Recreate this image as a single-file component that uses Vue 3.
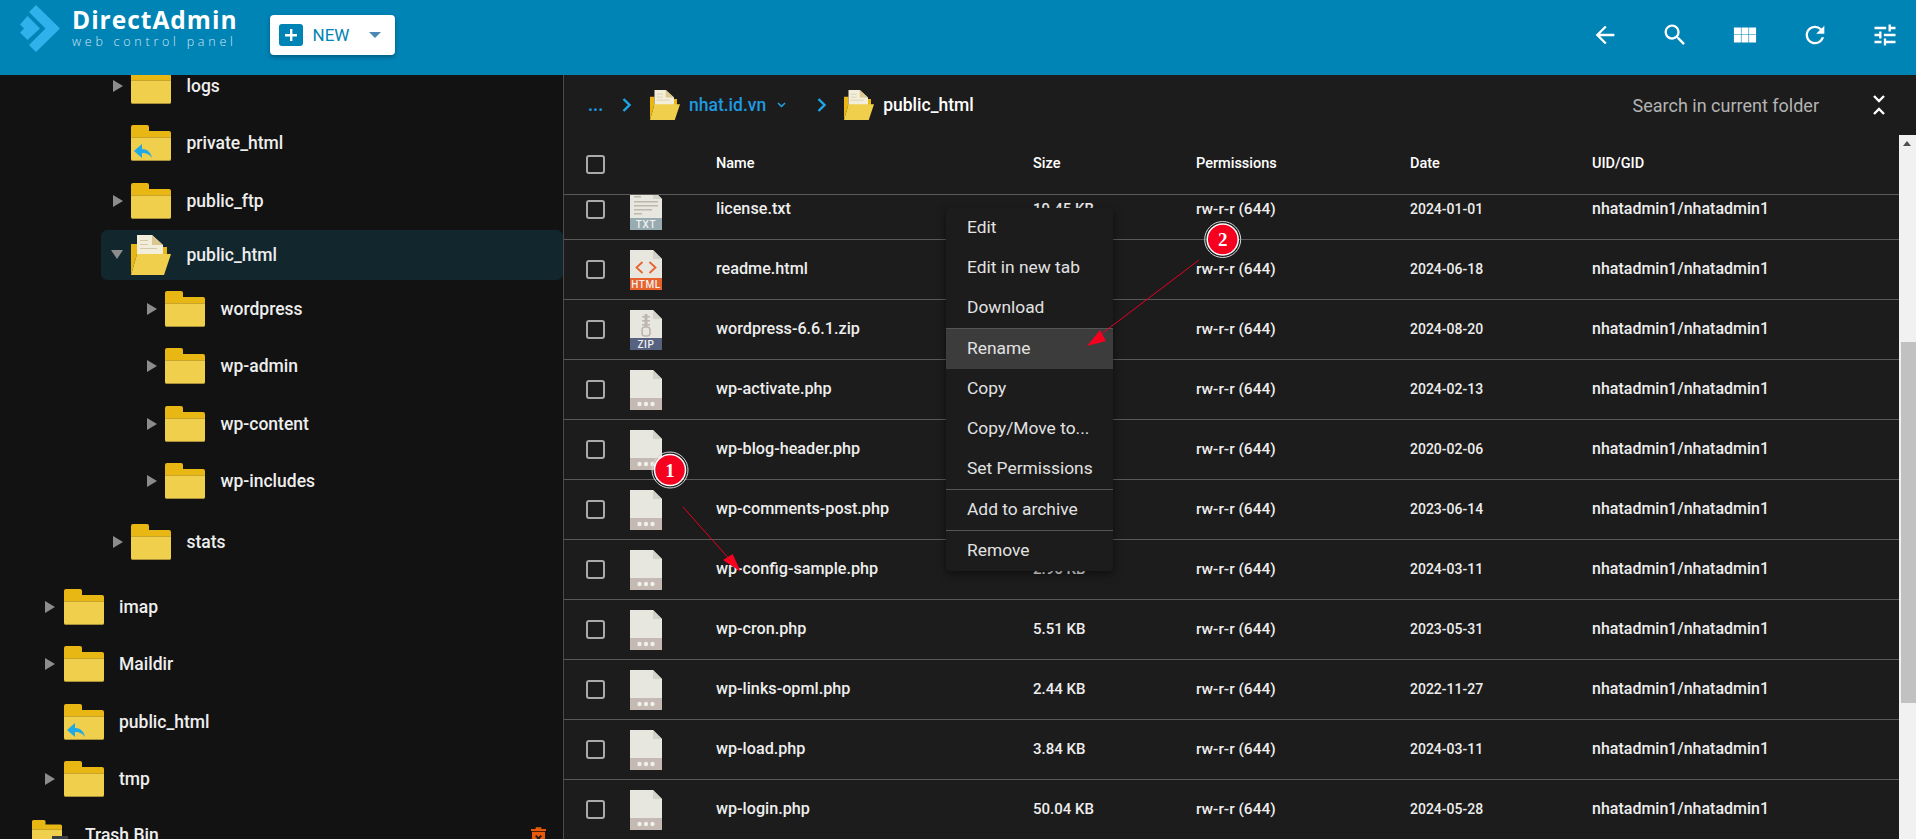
<template>
  <div class="page">
    <svg class="defs" aria-hidden="true">
      <symbol id="folder" viewBox="0 0 40 36">
        <path fill="#e9b714" d="M0 2a2 2 0 0 1 2-2h14a2 2 0 0 1 2 2v4h20a2 2 0 0 1 2 2v5H0z" />
        <path fill="#efcf4b" d="M0 13h40v21a2 2 0 0 1-2 2H2a2 2 0 0 1-2-2z" />
        <rect y="12" width="40" height="1" fill="#c9a52b" />
        <rect x="1" y="35" width="38" height="1" fill="#a8913a" />
      </symbol>
      <symbol id="folder-link" viewBox="0 0 40 36">
        <use href="#folder" width="40" height="36" />
        <path fill="#1fa9e6" d="M3 26l8-7v5c6 0 9 4 10 9-2-3-5-5-10-5v5z" />
      </symbol>
      <symbol id="folder-trash" viewBox="0 0 36 30">
        <use href="#folder" width="30" height="27" />
        <rect x="20" y="16" width="16" height="14" fill="#3a3f44" />
      </symbol>
      <symbol id="folder-open" viewBox="0 0 40 40">
        <path fill="#e9b714" d="M0 9h6v10L0 40z" />
        <rect x="30" y="12" width="6" height="8" fill="#e9b714" />
        <path fill="#f3eedb" d="M6 0h15l11 10v12H6z" />
        <path fill="#dcc88e" d="M21 0l11 10H21z" />
        <path fill="#d3c9a6" d="M9 5h8v1H9zM9 9h8v1H9zM9 13h17v1H9z" />
        <path fill="#efcf4b" d="M6 19h34l-7 21H0z" />
      </symbol>
      <symbol id="file-php" viewBox="0 0 32 40">
        <path fill="#e8e7df" d="M0 0h23l9 9v31H0z" />
        <path fill="#d3d2c6" d="M23 0l9 9h-9z" />
        <rect y="28" width="32" height="12" fill="#c5bab3" />
        <circle cx="9.500" cy="34" r="2.200" fill="#f1efe9" />
        <circle cx="16" cy="34" r="2.200" fill="#f1efe9" />
        <circle cx="22.500" cy="34" r="2.200" fill="#f1efe9" />
      </symbol>
      <symbol id="file-txt" viewBox="0 0 32 40">
        <path fill="#e8e7df" d="M0 0h23l9 9v31H0z" />
        <path fill="#d3d2c6" d="M23 0l9 9h-9z" />
        <path fill="#bcb9ac" d="M4 6h7v1.400H4zM4 11h24v1.400H4zM4 15h24v1.400H4zM4 19h18v1.400H4zM4 23h8v1.400H4z" />
        <rect y="28" width="32" height="12" fill="#98abb0" />
      </symbol>
      <symbol id="file-html" viewBox="0 0 32 40">
        <path fill="#e8e7df" d="M0 0h23l9 9v31H0z" />
        <path fill="#d3d2c6" d="M23 0l9 9h-9z" />
        <path fill="none" stroke="#e8622d" stroke-width="1.800" d="M12.500 12l-6 5.500 6 5.500M19.500 12l6 5.500-6 5.500" />
        <rect y="28" width="32" height="12" fill="#e8622d" />
      </symbol>
      <symbol id="file-zip" viewBox="0 0 32 40">
        <path fill="#e8e7df" d="M0 0h23l9 9v31H0z" />
        <path fill="#d3d2c6" d="M23 0l9 9h-9z" />
        <path fill="#bdb6ac" d="M14.500 4h3v13h-3zM12 6h8v1.500h-8zM12 10h8v1.500h-8zM12 14h8v1.500h-8z" />
        <rect x="12" y="17" width="8" height="9" rx="3" fill="none" stroke="#bdb6ac" stroke-width="1.600" />
        <rect y="28" width="32" height="12" fill="#56627f" />
      </symbol>
    </svg>

    <header class="topbar">
      <div class="logo">
        <svg class="logo-mark" viewBox="0 0 40 47">
          <path fill="#2fb1eb" d="M16 0l24 23.500L16 47l-7-7 16.500-16.500L9 7z" />
          <path fill="#2fb1eb" d="M7.500 11L20 23.500 7.500 35 0 27.500l4-4-4-4z" />
        </svg>
        <div class="logo-text">
          <div class="logo-name">DirectAdmin</div>
          <div class="logo-sub">web control panel</div>
        </div>
      </div>
      <button class="new-btn">
        <span class="plus">
          <svg viewBox="0 0 24 22" width="24" height="22"><path fill="#fff" d="M11 5h2.400v5H18v2.400h-4.600V17H11v-4.600H6V10h5z" /></svg>
        </span>
        <span class="new-label">NEW</span>
        <span class="caret"></span>
      </button>
      <nav class="top-icons">
        <svg v-for="icon in topIcons" :key="icon" viewBox="0 0 24 24" width="28" height="28"><path fill="#fff" :d="icon" /></svg>
      </nav>
    </header>

    <main class="body">
      <aside class="tree">
        <div
          v-for="item in tree"
          :key="item.name + item.level"
          class="tree-row"
          :class="['level-' + item.level, item.cls]"
        >
          <span class="arrow" :class="item.arrow"></span>
          <svg class="tree-icon" :class="item.icon"><use :href="'#' + item.icon" /></svg>
          <span class="tree-name">{{ item.name }}</span>
          <svg v-if="item.cls === 'trash'" class="trash-btn" viewBox="0 0 16 20">
            <path fill="#e8590c" d="M5 0h6v2h5v2H0V2h5zM1 5h14v15H1z" />
            <path stroke="#1a1a1a" stroke-width="2" d="M5 9l6 6M11 9l-6 6" />
          </svg>
        </div>
      </aside>

      <section class="files">
        <div class="crumbs">
          <span class="dots">...</span>
          <svg class="crumb-sep" viewBox="0 0 9 14"><path fill="none" stroke="#1ea7e8" stroke-width="2.400" d="M1.500 1l6 6-6 6" /></svg>
          <svg class="crumb-folder"><use href="#folder-open" /></svg>
          <span class="crumb-link">nhat.id.vn</span>
          <svg class="crumb-down" viewBox="0 0 9 6"><path fill="none" stroke="#1ea7e8" stroke-width="1.500" d="M1 1l3.500 3.500L8 1" /></svg>
          <svg class="crumb-sep second" viewBox="0 0 9 14"><path fill="none" stroke="#1ea7e8" stroke-width="2.400" d="M1.500 1l6 6-6 6" /></svg>
          <svg class="crumb-folder"><use href="#folder-open" /></svg>
          <span class="crumb-current">public_html</span>
          <span class="search">Search in current folder</span>
          <svg class="collapse" viewBox="0 0 12 20"><path fill="none" stroke="#fff" stroke-width="2.400" d="M1 1l5 5 5-5M1 19l5-5 5 5" /></svg>
        </div>

        <div class="table-wrap">
          <div class="table">
            <div class="file-row head">
              <span class="check"></span>
              <span></span>
              <span class="cell">Name</span>
              <span class="cell">Size</span>
              <span class="cell">Permissions</span>
              <span class="cell">Date</span>
              <span class="cell">UID/GID</span>
            </div>
            <div class="rows">
              <div v-for="file in files" :key="file.name" class="file-row">
                <span class="check"></span>
                <svg class="file-icon" viewBox="0 0 32 40">
                  <use :href="'#file-' + file.type" width="32" height="40" />
                  <text v-if="file.type !== 'php'" x="16" y="38" class="badge-text">{{ file.type.toUpperCase() }}</text>
                </svg>
                <span class="cell c-name">{{ file.name }}</span>
                <span class="cell c-size">{{ file.size }}</span>
                <span class="cell c-perm">rw-r-r (644)</span>
                <span class="cell c-date">{{ file.date }}</span>
                <span class="cell c-uid">nhatadmin1/nhatadmin1</span>
              </div>
            </div>
          </div>
          <div class="scrollbar">
            <span class="scroll-up"></span>
            <div class="scroll-thumb"></div>
          </div>
        </div>
      </section>
    </main>

    <ul class="context-menu">
      <li v-for="entry in menu" :key="entry.label" :class="{ sep: entry.sep, active: entry.active }">{{ entry.label }}</li>
    </ul>

    <svg class="notes" viewBox="0 0 1916 839">
      <line x1="682.700" y1="506.700" x2="732" y2="562" stroke="#e8001f" stroke-width="1" />
      <polygon points="740.700,571.700 723,560 732.700,554" fill="#f5001e" />
      <line x1="1199" y1="260" x2="1100" y2="335" stroke="#e8001f" stroke-width="1" />
      <polygon points="1087,346 1100,330 1106,341" fill="#f5001e" />
      <g v-for="note in notes" :key="note.n">
        <circle :cx="note.x" :cy="note.y" r="18" fill="none" stroke="#d8d8d8" stroke-width="1" />
        <circle :cx="note.x" :cy="note.y" r="15.500" fill="#f5001e" stroke="#fff" stroke-width="1.500" />
        <text :x="note.x" :y="note.y + 6.500" class="note-text">{{ note.n }}</text>
      </g>
    </svg>
  </div>
</template>

<script setup>
const topIcons = [
  'M20 11H7.830l5.590-5.590L12 4l-8 8 8 8 1.410-1.410L7.830 13H20v-2z',
  'M15.500 14h-.790l-.280-.270A6.471 6.471 0 0 0 16 9.500 6.500 6.500 0 1 0 9.500 16c1.610 0 3.090-.590 4.230-1.570l.270.280v.790l5 4.990L20.490 19l-4.990-5zm-6 0C7.010 14 5 11.990 5 9.500S7.010 5 9.500 5 14 7.010 14 9.500 11.990 14 9.500 14z',
  'M2.500 5.500h6v6h-6zM9 5.500h6v6H9zM15.500 5.500h6v6h-6zM2.500 12h6v6.500h-6zM9 12h6v6.500H9zM15.500 12h6v6.500h-6z',
  'M17.650 6.350A7.958 7.958 0 0 0 12 4c-4.420 0-7.990 3.580-7.990 8s3.570 8 7.990 8c3.730 0 6.840-2.550 7.730-6h-2.080A5.990 5.990 0 0 1 12 18c-3.310 0-6-2.690-6-6s2.690-6 6-6c1.660 0 3.140.690 4.220 1.780L13 11h7V4l-2.350 2.350z',
  'M3 17v2h6v-2H3zM3 5v2h10V5H3zm10 16v-2h8v-2h-8v-2h-2v6h2zM7 9v2H3v2h4v2h2V9H7zm14 4v-2H11v2h10zm-6-4h2V7h4V5h-4V3h-2v6z',
]

const tree = [
  { name: 'logs', level: 1, arrow: 'right', icon: 'folder', cls: 'first' },
  { name: 'private_html', level: 1, icon: 'folder-link' },
  { name: 'public_ftp', level: 1, arrow: 'right', icon: 'folder' },
  { name: 'public_html', level: 1, arrow: 'down', icon: 'folder-open', cls: 'selected' },
  { name: 'wordpress', level: 2, arrow: 'right', icon: 'folder' },
  { name: 'wp-admin', level: 2, arrow: 'right', icon: 'folder' },
  { name: 'wp-content', level: 2, arrow: 'right', icon: 'folder' },
  { name: 'wp-includes', level: 2, arrow: 'right', icon: 'folder' },
  { name: 'stats', level: 1, arrow: 'right', icon: 'folder', cls: 'stats' },
  { name: 'imap', level: 0, arrow: 'right', icon: 'folder', cls: 'imap' },
  { name: 'Maildir', level: 0, arrow: 'right', icon: 'folder' },
  { name: 'public_html', level: 0, icon: 'folder-link' },
  { name: 'tmp', level: 0, arrow: 'right', icon: 'folder' },
  { name: 'Trash Bin', level: 0, icon: 'folder-trash', cls: 'trash' },
]

// sizes that sit fully behind the open menu are left blank
const files = [
  { name: 'license.txt', size: '19.45 KB', date: '2024-01-01', type: 'txt' },
  { name: 'readme.html', size: '', date: '2024-06-18', type: 'html' },
  { name: 'wordpress-6.6.1.zip', size: '', date: '2024-08-20', type: 'zip' },
  { name: 'wp-activate.php', size: '', date: '2024-02-13', type: 'php' },
  { name: 'wp-blog-header.php', size: '', date: '2020-02-06', type: 'php' },
  { name: 'wp-comments-post.php', size: '', date: '2023-06-14', type: 'php' },
  { name: 'wp-config-sample.php', size: '2.96 KB', date: '2024-03-11', type: 'php' },
  { name: 'wp-cron.php', size: '5.51 KB', date: '2023-05-31', type: 'php' },
  { name: 'wp-links-opml.php', size: '2.44 KB', date: '2022-11-27', type: 'php' },
  { name: 'wp-load.php', size: '3.84 KB', date: '2024-03-11', type: 'php' },
  { name: 'wp-login.php', size: '50.04 KB', date: '2024-05-28', type: 'php' },
]

const menu = [
  { label: 'Edit' },
  { label: 'Edit in new tab' },
  { label: 'Download' },
  { label: 'Rename', sep: true, active: true },
  { label: 'Copy' },
  { label: 'Copy/Move to...' },
  { label: 'Set Permissions' },
  { label: 'Add to archive', sep: true },
  { label: 'Remove', sep: true },
]

const notes = [
  { n: 1, x: 670, y: 470 },
  { n: 2, x: 1222.7, y: 239.5 },
]
</script>

<style>
html, body {
  margin: 0;
  background: #1c1c1c;
  overflow: hidden;
}
.badge-text {
  font-family: Roboto, "Liberation Sans", sans-serif;
  font-size: 10px;
  letter-spacing: 0.6px;
  fill: #f1f1f1;
  text-anchor: middle;
}
.note-text {
  font-family: "Liberation Serif", serif;
  font-weight: 700;
  font-size: 19px;
  fill: #fff;
  text-anchor: middle;
}
</style>

<style scoped>
.page {
  position: relative;
  height: 839px;
  overflow: hidden;
  font-family: Roboto, "Liberation Sans", sans-serif;
  color: #eee;
}
.defs {
  position: absolute;
  width: 0;
  height: 0;
}
.topbar {
  display: flex;
  align-items: flex-start;
  height: 75px;
  padding-left: 20px;
  padding-right: 17px;
  box-sizing: border-box;
  background: #0083b5;
}
.logo {
  display: flex;
  margin-top: 5px;
}
.logo-mark {
  width: 40px;
  height: 47px;
}
.logo-text {
  margin-left: 12px;
  width: 165px;
  color: #fff;
}
.logo-name {
  font-family: "Open Sans", sans-serif;
  font-weight: 700;
  font-size: 24.500px;
  line-height: 30px;
  letter-spacing: 1px;
}
.logo-sub {
  font-family: "Open Sans", sans-serif;
  font-weight: 300;
  font-size: 12.500px;
  line-height: 14px;
  letter-spacing: 3.750px;
  color: #cfe8f3;
  white-space: nowrap;
}
.new-btn {
  display: flex;
  align-items: center;
  width: 125px;
  height: 40px;
  margin-top: 15px;
  margin-left: 33px;
  padding: 0 0 0 8.500px;
  border: 0;
  border-radius: 4px;
  background: #fff;
  box-shadow: 0 2px 4px rgba(0, 0, 0, 0.3);
  font-family: inherit;
}
.plus {
  display: flex;
  width: 24px;
  height: 22px;
  border-radius: 3px;
  background: #0083b5;
}
.new-label {
  margin-left: 10px;
  font-size: 17px;
  font-weight: 400;
  color: #0083b5;
}
.caret {
  margin-left: 20px;
  border-top: 6px solid #4d88b5;
  border-left: 6.500px solid transparent;
  border-right: 6.500px solid transparent;
}
.top-icons {
  display: flex;
  gap: 42px;
  margin-left: auto;
  margin-top: 21px;
}
.body {
  display: flex;
  height: 764px;
}
.tree {
  width: 563px;
  flex: none;
  overflow: hidden;
  background: #121212;
  border-right: 1px solid #4a4a4a;
}
.tree-row {
  display: flex;
  align-items: center;
  height: 57.600px;
  box-sizing: border-box;
  font-size: 17.500px;
  font-weight: 500;
  white-space: nowrap;
}
.level-0 { padding-left: 45px; }
.level-1 { padding-left: 112.500px; }
.level-2 { padding-left: 146.500px; }
.first { margin-top: -18px; }
.stats { margin-top: 3px; }
.imap { margin-top: 7px; }
.selected {
  height: 50px;
  margin-left: 101px;
  padding-left: 11.500px;
  border-radius: 6px;
  background: #12262e;
}
.trash {
  height: 54px;
  padding-left: 32px;
}
.arrow {
  flex: none;
  width: 10px;
  margin-right: 8.500px;
}
.arrow.right {
  width: 0;
  margin-right: 8.500px;
  border-left: 10px solid #8c8c8c;
  border-top: 6px solid transparent;
  border-bottom: 6px solid transparent;
}
.arrow.down {
  width: 0;
  margin-left: -2px;
  margin-right: 8.500px;
  border-top: 9px solid #8c8c8c;
  border-left: 6px solid transparent;
  border-right: 6px solid transparent;
}
.trash .arrow {
  display: none;
}
.tree-icon {
  flex: none;
  width: 40px;
  height: 36px;
}
.tree-icon.folder-open {
  height: 40px;
}
.trash .tree-icon {
  width: 36px;
  height: 30px;
}
.tree-name {
  margin-left: 15.500px;
}
.trash .tree-name {
  margin-left: 17px;
}
.trash-btn {
  width: 15px;
  height: 19px;
  margin-left: auto;
  margin-right: 17px;
  margin-top: 2px;
}
.files {
  flex: 1;
  display: flex;
  flex-direction: column;
  min-width: 0;
  background: #1c1c1c;
}
.crumbs {
  display: flex;
  align-items: center;
  flex: none;
  height: 60px;
  padding-left: 24px;
  padding-right: 31px;
  font-size: 17.500px;
  font-weight: 500;
}
.dots {
  width: 15px;
  color: #1f9ae0;
  font-weight: 700;
}
.crumb-sep {
  width: 9px;
  height: 14px;
  margin-left: 19px;
}
.crumb-sep.second {
  margin-left: 31px;
}
.crumb-folder {
  width: 30px;
  height: 30px;
  margin-left: 19px;
}
.crumb-sep.second + .crumb-folder {
  margin-left: 18px;
}
.crumb-link {
  margin-left: 9px;
  color: #1f9ae0;
}
.crumb-down {
  width: 9px;
  height: 6px;
  margin-left: 11px;
}
.crumb-current {
  margin-left: 9px;
  font-size: 17.500px;
  color: #fff;
}
.search {
  margin-left: auto;
  font-size: 18px;
  font-weight: 400;
  color: #b4b4b4;
}
.collapse {
  width: 12px;
  height: 20px;
  margin-left: 54px;
}
.table-wrap {
  flex: 1;
  display: flex;
  min-height: 0;
}
.table {
  flex: 1;
  display: flex;
  flex-direction: column;
  min-width: 0;
}
.rows {
  flex: 1;
  overflow: hidden;
}
.rows .file-row:first-child {
  margin-top: -15px;
}
.file-row {
  display: grid;
  grid-template-columns: 44px 86px 317px 163px 214px 182px 1fr;
  align-items: center;
  height: 60px;
  padding-left: 22px;
  box-sizing: border-box;
  border-bottom: 1px solid #595959;
  font-weight: 500;
  color: #eee;
  white-space: nowrap;
}
.cell {
  margin-bottom: 2px;
}
.c-name { font-size: 16.200px; }
.c-size { font-size: 15px; }
.c-perm { font-size: 15.500px; }
.c-date { font-size: 14px; }
.c-uid { font-size: 16px; }
.file-row.head {
  flex: none;
  font-size: 14.500px;
  color: #fff;
}
.check {
  width: 19px;
  height: 19px;
  box-sizing: border-box;
  border: 2px solid #aaa;
  border-radius: 3px;
}
.file-icon {
  width: 32px;
  height: 40px;
}
.scrollbar {
  flex: none;
  width: 17px;
  background: #f1f1f1;
}
.scroll-up {
  display: block;
  width: 0;
  margin: 6px 0 0 4px;
  border-bottom: 5px solid #505050;
  border-left: 4.500px solid transparent;
  border-right: 4.500px solid transparent;
}
.scroll-thumb {
  width: 15px;
  height: 361px;
  margin-top: 196px;
  margin-left: 2px;
  background: #c1c1c1;
}
.context-menu {
  position: absolute;
  left: 946px;
  top: 208px;
  width: 167px;
  margin: 0;
  padding: 0;
  list-style: none;
  background: #1c1c1c;
  border-radius: 4px;
  box-shadow: 0 3px 8px rgba(0, 0, 0, 0.5);
  font-size: 17.400px;
  color: #e2e2e2;
}
.context-menu li {
  height: 40px;
  line-height: 39px;
  padding-left: 21px;
}
.context-menu li.sep {
  border-top: 1px solid #555;
}
.context-menu li.active {
  background: #3c3c3c;
}
.notes {
  position: absolute;
  left: 0;
  top: 0;
  width: 1916px;
  height: 839px;
  pointer-events: none;
}
</style>
